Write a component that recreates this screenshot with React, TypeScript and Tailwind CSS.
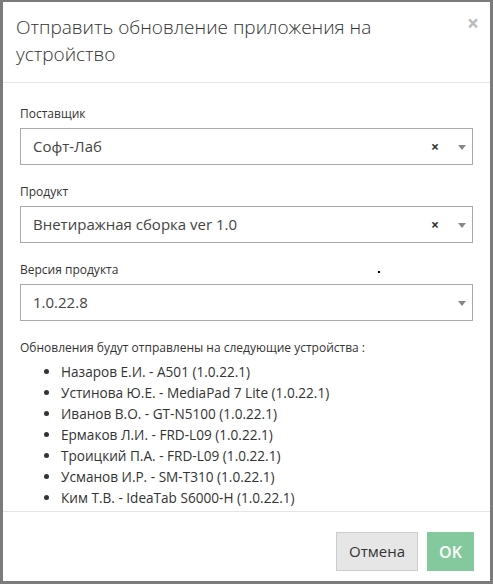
import React from "react";

function Select({ value, clearable = true }: { value: string; clearable?: boolean }) {
  return (
    <div className="h-[37px] border border-[#aaaaaa] flex items-center pl-[12px] pr-[6px]">
      <span className="flex-1 text-[15px] text-[#444]">{value}</span>
      {clearable && <span className="text-[14px] font-bold text-[#333] mr-[19px] leading-none">×</span>}
      <span className="w-0 h-0 border-l-[4px] border-r-[4px] border-t-[5px] border-l-transparent border-r-transparent border-t-[#888] mt-[2px]"></span>
    </div>
  );
}

const devices = [
  "Назаров Е.И. - A501 (1.0.22.1)",
  "Устинова Ю.Е. - MediaPad 7 Lite (1.0.22.1)",
  "Иванов В.О. - GT-N5100 (1.0.22.1)",
  "Ермаков Л.И. - FRD-L09 (1.0.22.1)",
  "Троицкий П.А. - FRD-L09 (1.0.22.1)",
  "Усманов И.Р. - SM-T310 (1.0.22.1)",
  "Ким Т.В. - IdeaTab S6000-H (1.0.22.1)",
];

export default function App() {
  return (
    <div
      className="w-[493px] h-[584px] bg-[#7b7b7b] pt-[2px] pl-[3px] pr-[3px] pb-[3px]"
      style={{ fontFamily: '"Open Sans", sans-serif' }}
    >
      <div className="bg-white h-full flex flex-col relative">
        <div className="h-[81px] border-b border-[#e5e5e5] relative pl-[13px] pt-[12px] pr-[40px]">
          <h4 className="text-[19px] font-light leading-[27px] text-[#333]">
            Отправить обновление приложения на устройство
          </h4>
          <span className="absolute right-[11px] top-[11px] text-[21px] font-bold text-[#bbbbbb] leading-none">×</span>
        </div>
        <div className="px-[17px] pt-[22px] pb-[2px] relative">
          <div className="mb-[18px]">
            <div className="text-[12px] leading-[17px] text-[#333] mb-[6px]">Поставщик</div>
            <Select value="Софт-Лаб" />
          </div>
          <div className="mb-[18px]">
            <div className="text-[12px] leading-[17px] text-[#333] mb-[6px]">Продукт</div>
            <Select value="Внетиражная сборка ver 1.0" />
          </div>
          <div className="mb-[18px] relative">
            <div className="text-[12px] leading-[17px] text-[#333] mb-[6px]">Версия продукта</div>
            <span className="absolute left-[358px] top-[10px] w-[2px] h-[2px] bg-black"></span>
            <Select value="1.0.22.8" clearable={false} />
          </div>
          <div className="text-[12px] leading-[17px] text-[#333]">
            Обновления будут отправлены на следующие устройства :
          </div>
          <ul className="list-disc pl-[41px] mt-[5px] text-[13.6px] leading-[21px] text-[#333]">
            {devices.map((d) => (
              <li key={d}>{d}</li>
            ))}
          </ul>
        </div>
        <div className="mt-auto border-t border-[#e5e5e5] flex justify-end gap-[9px] pt-[20px] pb-[10px] pr-[16px]">
          <button className="h-[39px] w-[82px] bg-[#e6e6e6] border border-[#cccccc] text-[15px] text-[#333]">
            Отмена
          </button>
          <button className="h-[39px] w-[47px] bg-[#84c99d] text-[16px] font-semibold text-white">OK</button>
        </div>
      </div>
    </div>
  );
}
